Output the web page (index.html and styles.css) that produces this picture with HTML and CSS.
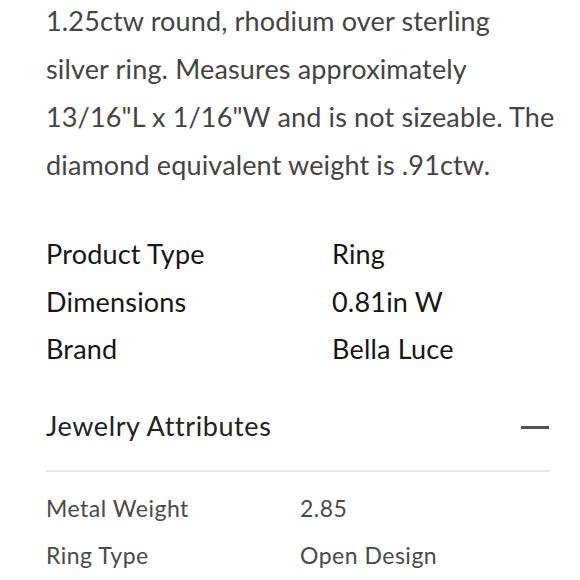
FILE: index.html
```html
<!DOCTYPE html>
<html>
<head>
<meta charset="utf-8">
<link rel="stylesheet" href="styles.css">
</head>
<body>
<div class="page">
  <p class="desc">1.25ctw round, rhodium over sterling<br>silver ring. Measures approximately<br>13/16"L x 1/16"W and is not sizeable. The<br>diamond equivalent weight is .91ctw.</p>
  <div class="specs">
    <div class="label">Product Type</div><div class="value">Ring</div>
    <div class="label">Dimensions</div><div class="value">0.81in W</div>
    <div class="label">Brand</div><div class="value">Bella Luce</div>
  </div>
  <div class="section-head">
    <span class="section-title">Jewelry Attributes</span>
    <span class="minus"></span>
  </div>
  <div class="attrs">
    <div>Metal Weight</div><div>2.85</div>
    <div>Ring Type</div><div>Open Design</div>
  </div>
</div>
</body>
</html>
```

FILE: styles.css
```css
html, body {
  margin: 0;
  padding: 0;
  background: #fff;
}
.page {
  font-family: Lato, "Open Sans", sans-serif;
  padding-left: 46px;
  width: 504px;
}
.desc {
  margin: -3px 0 0 0;
  font-size: 27px;
  line-height: 48px;
  letter-spacing: 0.15px;
  color: #444;
  width: 530px;
}
.specs {
  margin-top: 41px;
  display: grid;
  grid-template-columns: 286px auto;
  font-size: 27px;
  line-height: 47.5px;
  letter-spacing: 0.2px;
  color: #151515;
}
.section-head {
  margin-top: 29.5px;
  display: flex;
  justify-content: space-between;
  align-items: center;
  padding-bottom: 20px;
  border-bottom: 2px solid #e6e6e6;
}
.section-title {
  font-size: 27px;
  line-height: 48px;
  letter-spacing: 0.6px;
  color: #222;
}
.minus {
  width: 28px;
  height: 3px;
  background: #555;
  margin-top: 2px;
  margin-right: 1px;
}
.attrs {
  margin-top: 13px;
  display: grid;
  grid-template-columns: 254px auto;
  font-size: 23px;
  line-height: 47px;
  letter-spacing: 0.5px;
  color: #4a4a4a;
}
```
